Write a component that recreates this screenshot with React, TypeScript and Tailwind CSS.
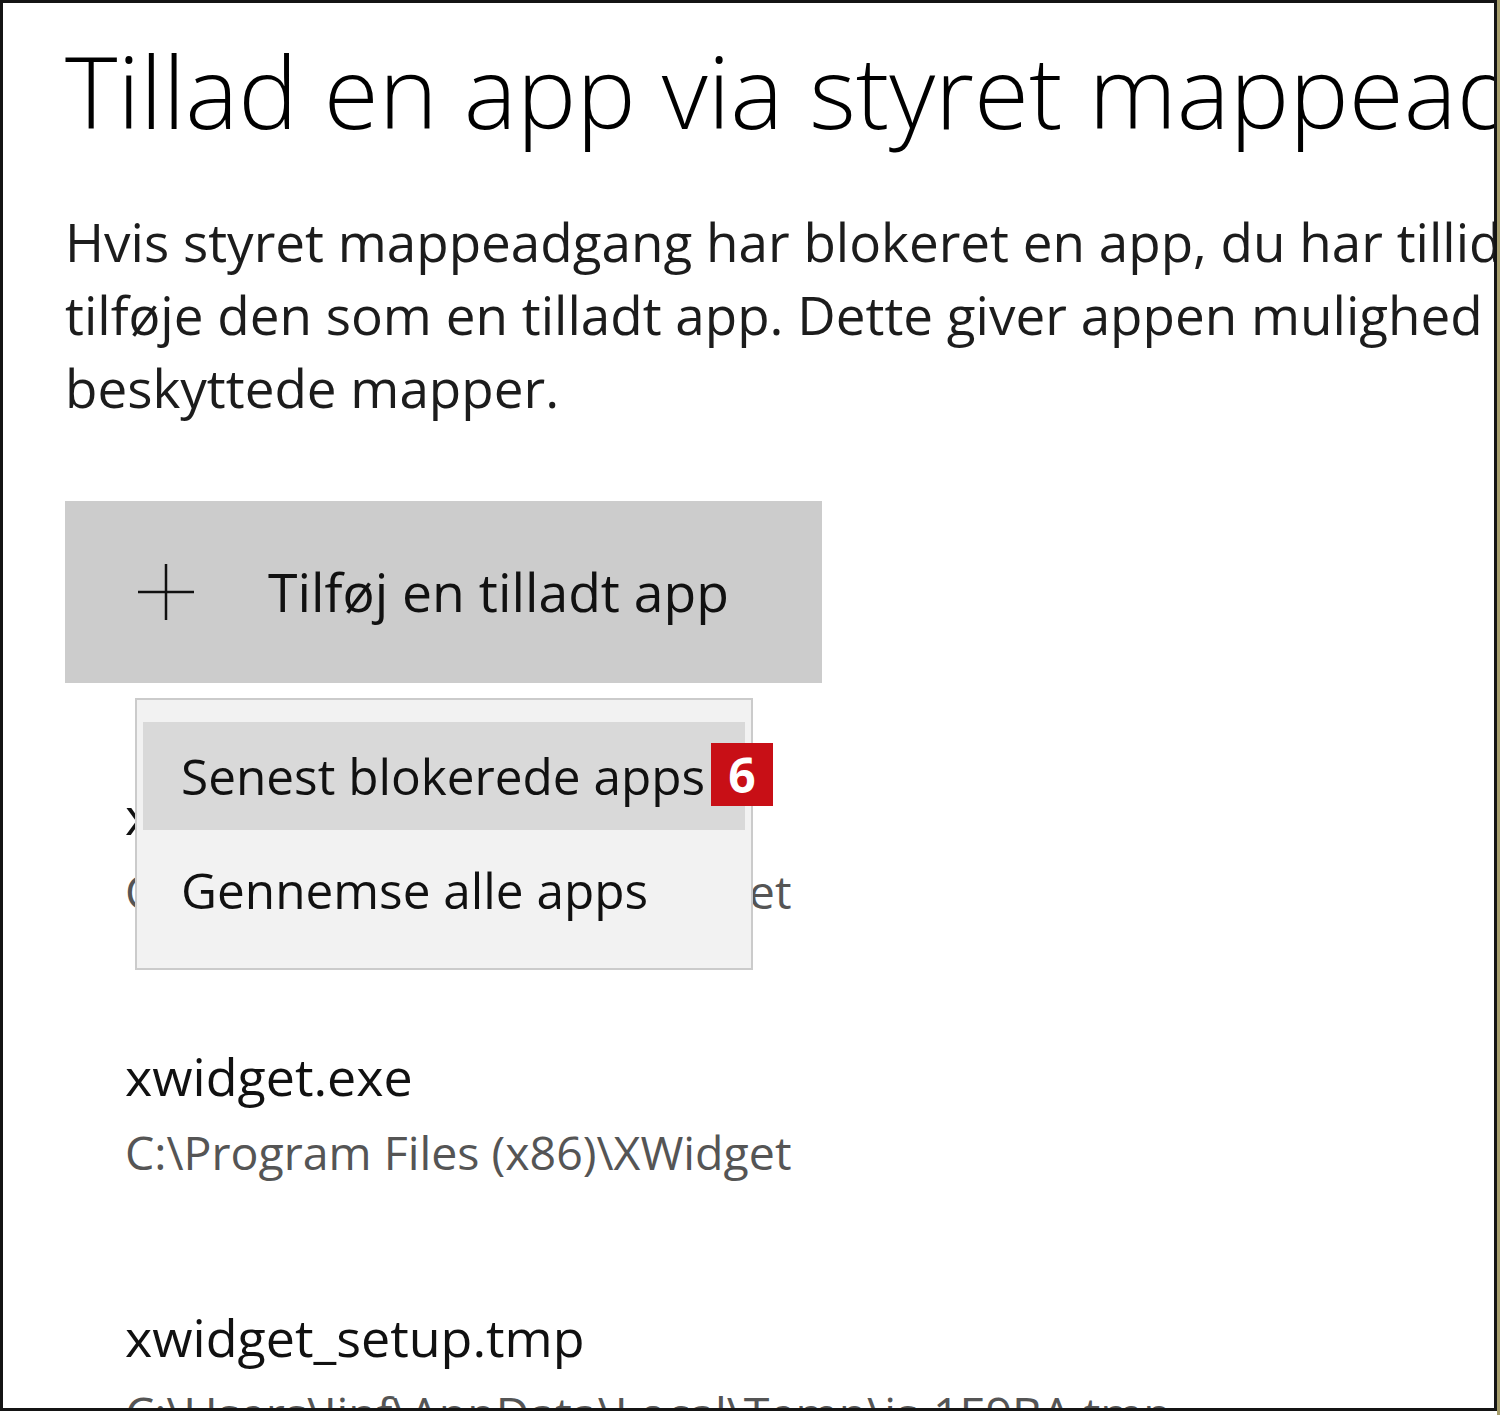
interface AppEntry { name: string; path: string }

const apps: AppEntry[] = [
  { name: "xwidget.exe", path: "C:\\Program Files (x86)\\XWidget" },
  { name: "xwidget.exe", path: "C:\\Program Files (x86)\\XWidget" },
  { name: "xwidget_setup.tmp", path: "C:\\Users\\Jinf\\AppData\\Local\\Temp\\is-1E9BA.tmp" },
];

const font = "font-['Open_Sans','Noto_Sans',sans-serif]";

export default function App() {
  return (
    <div className={`flex h-[1415px] w-[1500px] items-start bg-white ${font}`}>
      <div className="h-[1411px] w-[1497px] overflow-hidden border-[3px] border-[#141414] bg-white pl-[62px]">
        <h1 className="mt-[37px] whitespace-nowrap text-[100px] font-light leading-[100px] text-black">
          Tillad en app via styret mappeadgang
        </h1>

        <div className="mt-[65px] whitespace-nowrap text-[53px] leading-[73px] text-[#1c1c1c]">
          <p>Hvis styret mappeadgang har blokeret en app, du har tillid til, kan du</p>
          <p>tilføje den som en tilladt app. Dette giver appen mulighed for at foretage ændringer i</p>
          <p>beskyttede mapper.</p>
        </div>

        <div className="relative mt-[77px]">
          <button className="flex h-[182px] w-[757px] items-center bg-[#cccccc] pl-[73px] text-left">
            <svg width="56" height="56" viewBox="0 0 56 56" className="text-[#111]">
              <path d="M28 0v56M0 28h56" stroke="currentColor" strokeWidth="2.5" fill="none" />
            </svg>
            <span className="ml-[74px] whitespace-nowrap text-[53.5px] text-[#111]">Tilføj en tilladt app</span>
          </button>

          <div className="absolute left-[70px] top-[197px] z-10 h-[272px] w-[618px] border-2 border-[#cbcbcb] bg-[#f2f2f2] px-[6px] pt-[22px]">
            <div className="relative flex h-[108px] items-center bg-[#d9d9d9] pl-[38px]">
              <span className="whitespace-nowrap text-[49.5px] text-[#111]">Senest blokerede apps</span>
              <span className="absolute left-[568px] top-[21px] flex h-[63px] w-[62px] items-center justify-center bg-[#c80f16] text-[48px] font-bold text-white">
                6
              </span>
            </div>
            <div className="flex h-[120px] items-center pl-[38px]">
              <span className="whitespace-nowrap text-[49.5px] text-[#111]">Gennemse alle apps</span>
            </div>
          </div>

          <div className="mt-[100px] pl-[60px]">
            {apps.map((app, i) => (
              <div key={i} className="mb-[121px]">
                <p className="whitespace-nowrap text-[52px] leading-[64px] text-[#111]">{app.name}</p>
                <p className="mt-[12px] whitespace-nowrap text-[46.5px] leading-[64px] text-[#555]">{app.path}</p>
              </div>
            ))}
          </div>
        </div>
      </div>
      <div className="h-[1415px] w-[3px] bg-[#a59d6c]" />
    </div>
  );
}
